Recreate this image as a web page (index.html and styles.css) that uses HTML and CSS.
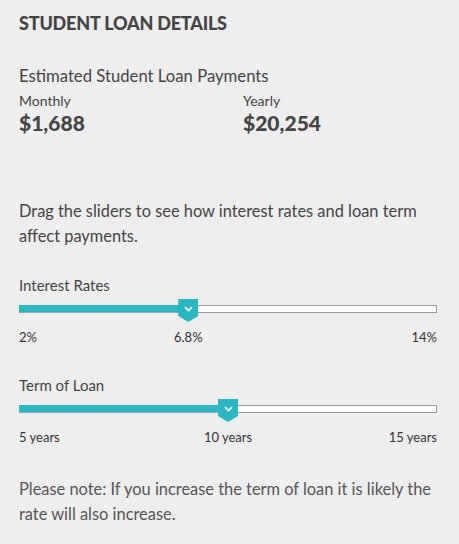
FILE: index.html
```html
<!DOCTYPE html>
<html lang="en">
<head>
  <meta charset="UTF-8">
  <title>Student Loan Details</title>
  <link rel="stylesheet" href="styles.css">
</head>
<body>
<div class="panel">
  <h2 class="title">STUDENT LOAN DETAILS</h2>

  <p class="subtitle">Estimated Student Loan Payments</p>
  <div class="payments">
    <div class="payment">
      <span class="payment-label">Monthly</span>
      <strong class="payment-value">$1,688</strong>
    </div>
    <div class="payment">
      <span class="payment-label">Yearly</span>
      <strong class="payment-value">$20,254</strong>
    </div>
  </div>

  <p class="intro">Drag the sliders to see how interest rates and loan term affect payments.</p>

  <!-- interest rate slider -->
  <div class="field">
    <label class="field-label">Interest Rates</label>
    <div class="slider">
      <div class="track">
        <div class="fill" style="width: 40.5%;"></div>
      </div>
      <div class="thumb" style="left: 40.5%;">
        <svg width="9" height="6" viewBox="0 0 9 6"><polyline points="1,1 4.5,4.5 8,1" fill="none" stroke="#fff" stroke-width="1.6"/></svg>
      </div>
    </div>
    <div class="ticks">
      <span>2%</span>
      <span class="tick-mid" style="left: 40.5%;">6.8%</span>
      <span>14%</span>
    </div>
  </div>

  <!-- loan term slider -->
  <div class="field field-term">
    <label class="field-label">Term of Loan</label>
    <div class="slider">
      <div class="track">
        <div class="fill" style="width: 50%;"></div>
      </div>
      <div class="thumb" style="left: 50%;">
        <svg width="9" height="6" viewBox="0 0 9 6"><polyline points="1,1 4.5,4.5 8,1" fill="none" stroke="#fff" stroke-width="1.6"/></svg>
      </div>
    </div>
    <div class="ticks">
      <span>5 years</span>
      <span class="tick-mid" style="left: 50%;">10 years</span>
      <span>15 years</span>
    </div>
  </div>

  <p class="note">Please note: If you increase the term of loan it is likely the rate will also increase.</p>
</div>
</body>
</html>
```

FILE: styles.css
```css
html, body { margin: 0; background: #eeeeee; }
body { font-family: Lato, "Open Sans", sans-serif; color: #444; }
.panel { width: 418px; padding: 11px 22px 20px 19px; }

.title { margin: 0; font-size: 18px; line-height: 24px; font-weight: 900; color: #444; letter-spacing: -0.2px; }

.subtitle { margin: 29px 0 0; font-size: 16.7px; line-height: 24px; }
.payments { display: grid; grid-template-columns: 224px 1fr; margin-top: 3px; }
.payment { display: flex; flex-direction: column; }
.payment-label { font-size: 14px; line-height: 19px; }
.payment-value { font-size: 21px; line-height: 26px; font-weight: 900; color: #444; }

.intro { margin: 62px 0 0; font-size: 16.4px; line-height: 25px; }

.field { margin-top: 27px; }
.field-term { margin-top: 29px; }
.field-label { display: block; font-size: 15px; line-height: 20px; }

.slider { position: relative; margin-top: 4px; padding: 6px 0 10px; }
.track { position: relative; height: 6px; background: #fff; border: 1px solid #999; }
.fill { position: absolute; left: -1px; top: -1px; height: 7px; background: #2cb6c1; border-bottom: 1px solid #8fa9ab; }
.thumb {
  position: absolute;
  top: 0;
  width: 20px;
  height: 23px;
  margin-left: -10px;
  background: #2cb6c1;
  clip-path: polygon(0 0, 100% 0, 100% 74%, 50% 100%, 0 74%);
  display: flex;
  justify-content: center;
  padding-top: 7px;
  box-sizing: border-box;
}
.thumb svg { display: block; }

.ticks { position: relative; display: flex; justify-content: space-between; margin-top: 5px; font-size: 13px; line-height: 18px; color: #333; }
.tick-mid { position: absolute; top: 0; transform: translateX(-50%); }

.note { margin: 30px 0 0; font-size: 16.4px; line-height: 25px; color: #555; }
```
